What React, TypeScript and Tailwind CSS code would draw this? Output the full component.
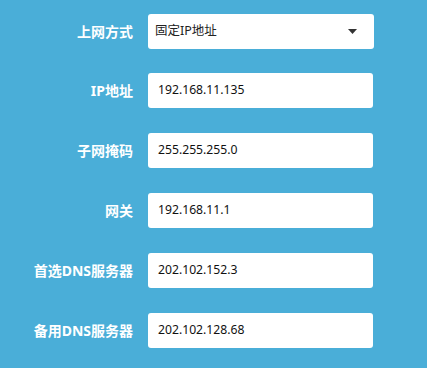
import React from "react";

const rows = [
  { label: "IP地址", value: "192.168.11.135" },
  { label: "子网掩码", value: "255.255.255.0" },
  { label: "网关", value: "192.168.11.1" },
  { label: "首选DNS服务器", value: "202.102.152.3" },
  { label: "备用DNS服务器", value: "202.102.128.68" },
];

const font = { fontFamily: '"Noto Sans", "Noto Sans CJK SC", sans-serif' };

export default function App() {
  return (
    <div className="w-[427px] h-[368px] bg-[#4aaed8] pt-[14px]" style={font}>
      {/* 上网方式 */}
      <div className="flex items-center h-[35px] mb-[24px]">
        <div className="w-[133px] text-right text-[14px] font-bold text-white">上网方式</div>
        <div className="ml-[15px] w-[226px] h-[35px] bg-white rounded-[3px] flex items-center justify-between pl-[7px] pr-[17px]">
          <span className="text-[12.5px] text-[#222]">固定IP地址</span>
          <svg className="w-[9px] h-[5px]" viewBox="0 0 9 5">
            <polygon points="0,0 9,0 4.5,5" fill="#333" />
          </svg>
        </div>
      </div>

      {rows.map((r) => (
        <div key={r.label} className="flex items-center h-[35px] mb-[25px]">
          <div className="w-[133px] text-right text-[14px] font-bold text-white">{r.label}</div>
          <div className="ml-[15px] w-[225px] h-[35px] bg-white rounded-[3px] flex items-center pl-[10px]">
            <span className="text-[12.2px] text-[#111]">{r.value}</span>
          </div>
        </div>
      ))}
    </div>
  );
}
